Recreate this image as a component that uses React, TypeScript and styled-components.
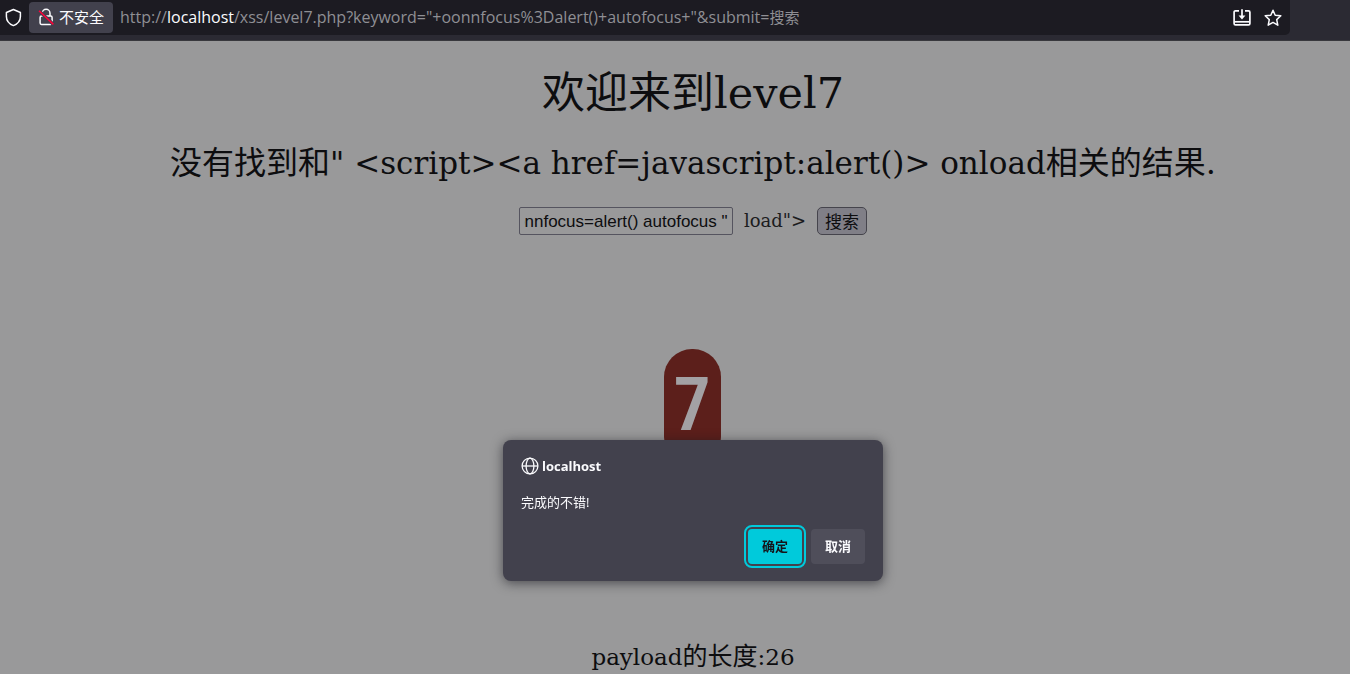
import React, { useLayoutEffect, useRef } from "react";
import styled, { createGlobalStyle } from "styled-components";

const ui = `"Open Sans", "Noto Sans CJK SC", sans-serif`;
const serif = `"DejaVu Serif", "Noto Sans CJK SC", serif`;

const GlobalStyle = createGlobalStyle`
  * { box-sizing: border-box; }
  body { margin: 0; background: #99999a; }
`;

const Window = styled.div`
  min-height: 100vh;
  display: flex;
  flex-direction: column;
  overflow: hidden;
`;

const Toolbar = styled.header`
  height: 41px;
  flex: none;
  padding: 0 60px 6px 0;
  background: #2b2a33;
  border-bottom: 1px solid #38383d;
`;

const AddressBar = styled.div`
  height: 35px;
  display: flex;
  align-items: center;
  padding: 0 8px 0 4px;
  background: #1c1b22;
  border-radius: 0 0 5px 0;
  color: #fbfbfe;
  font: 15px/20px ${ui};
`;

const IconButton = styled.button`
  display: flex;
  padding: 0;
  border: 0;
  background: none;
  color: #fbfbfe;
`;

const SecurityButton = styled.button`
  height: 31px;
  display: flex;
  align-items: center;
  gap: 4px;
  margin: 0 7px 0 6px;
  padding: 0 9px 2px 8px;
  border: 0;
  border-radius: 4px;
  background: #42414d;
  color: #fbfbfe;
  font: 15px/20px ${ui};
`;

const Url = styled.span`
  flex: 1;
  padding-bottom: 2px;
  color: #8f8f94;
  font-size: 16px;
  white-space: nowrap;
`;

const Host = styled.span`
  color: #fbfbfe;
`;

const Query = styled.span`
  font-size: 15px;
`;

const Actions = styled.div`
  display: flex;
  gap: 13px;
`;

const Page = styled.main`
  flex: 1;
  display: flex;
  flex-direction: column;
  align-items: center;
  padding: 20px 0 0 36px;
  color: #0d0d0f;
  font-family: ${serif};
`;

const Title = styled.h1`
  margin: 0;
  font-size: 43px;
  line-height: 64px;
  font-weight: 400;
`;

const Message = styled.h2`
  margin: 14px 0 0;
  font-size: 32px;
  line-height: 48px;
  font-weight: 400;
  white-space: nowrap;
`;

const Latin = styled.span<{ $size: number }>`
  font-size: ${(p) => p.$size}px;
`;

const SearchForm = styled.form`
  display: flex;
  align-items: center;
  margin-top: 20px;
  font-size: 18px;
  line-height: 28px;
`;

const SearchInput = styled.input`
  width: 214px;
  height: 28px;
  padding: 2px 4px 0;
  border: 1px solid #55545f;
  border-radius: 2px;
  outline: 0;
  background: #99999a;
  color: #0d0d0f;
  font: 17px "Liberation Sans", sans-serif;
`;

const Trailing = styled.span`
  margin: 0 11px;
  color: #1c1c1e;
`;

const SubmitButton = styled.button`
  height: 28px;
  padding: 0 7px;
  border: 1px solid #45444c;
  border-radius: 5px;
  background: #807f87;
  color: #0d0d0f;
  font: 17px/24px "Noto Sans CJK SC", sans-serif;
`;

const Badge = styled.svg`
  display: block;
  margin-top: 112px;
`;

const Payload = styled.h3`
  margin: 172px 0 0;
  font-size: 25px;
  line-height: 36px;
  font-weight: 400;
`;

const Dialog = styled.section`
  position: fixed;
  top: 440px;
  left: calc(50% + 18px);
  transform: translateX(-50%);
  width: 380px;
  padding: 16px 18px 17px;
  border-radius: 8px;
  background: #42414d;
  color: #fbfbfe;
  box-shadow: 0 2px 12px rgba(20, 20, 26, 0.6);
  font: 13px/20px ${ui};
`;

const DialogHeader = styled.h4`
  display: flex;
  align-items: center;
  gap: 3px;
  margin: 0;
  font-size: 13px;
  font-weight: 700;
`;

const DialogText = styled.p`
  margin: 16px 0 17px;
`;

const DialogButtons = styled.div`
  display: flex;
  justify-content: flex-end;
  gap: 9px;
`;

const DialogButton = styled.button<{ $primary?: boolean }>`
  width: 54px;
  height: 35px;
  padding: 0 0 2px;
  border: 0;
  border-radius: 4px;
  background: ${(p) => (p.$primary ? "#00cadb" : "#4f4e5a")};
  color: ${(p) => (p.$primary ? "#15141a" : "#fbfbfe")};
  outline: ${(p) => (p.$primary ? "2px solid #00cadb" : "0")};
  outline-offset: 2px;
  font: 700 13px/20px ${ui};
`;

const ShieldIcon = () => (
  <svg width="19" height="19" viewBox="0 0 19 19" fill="none" stroke="currentColor" strokeWidth="1.5" strokeLinejoin="round">
    <path d="M9.4 1.5 16.4 4.5V8.5C16.4 12.5 13.5 16 9.4 17.6 5.3 16 2.4 12.5 2.4 8.5V4.5Z" />
  </svg>
);

const InsecureIcon = () => (
  <svg width="18" height="20" viewBox="0 0 18 20" fill="none" stroke="currentColor" strokeWidth="1.5">
    <path d="M5.2 9V6.2a3.9 3.9 0 0 1 7.8 0V9" />
    <rect x="3.1" y="9" width="12" height="8.4" rx="1.4" />
    <path d="m2 3.8 14.4 13.6" stroke="#42414d" strokeWidth="3.4" />
    <path d="m2 3.8 14.4 13.6" stroke="#ff0039" />
  </svg>
);

const SaveIcon = () => (
  <svg width="18" height="18" viewBox="0 0 18 18" fill="none" stroke="currentColor" strokeWidth="1.7">
    <path d="M6 1.8H2.5a1.4 1.4 0 0 0-1.4 1.4v11.2a1.4 1.4 0 0 0 1.4 1.4h13a1.4 1.4 0 0 0 1.4-1.4V3.2a1.4 1.4 0 0 0-1.4-1.4H12M9 .2v8" />
    <path d="M1.2 12.8h15.6" />
    <path d="M5.6 6.6h6.8L9 10.4Z" fill="currentColor" stroke="none" />
  </svg>
);

const StarIcon = () => (
  <svg width="18" height="18" viewBox="0 0 18 18" fill="none" stroke="currentColor" strokeWidth="1.5" strokeLinejoin="round">
    <path d="m9 1.2 2.2 5 5.6.6-4.1 3.8 1.1 5.6L9 13.4l-4.8 2.8 1.1-5.6-4.1-3.8 5.6-.6Z" />
  </svg>
);

const GlobeIcon = () => (
  <svg width="18" height="18" viewBox="0 0 18 18" fill="none" stroke="currentColor" strokeWidth="1.3">
    <circle cx="9" cy="9" r="7.9" />
    <ellipse cx="9" cy="9" rx="3.9" ry="7.9" />
    <path d="M1.1 9h15.8" />
  </svg>
);

export default function App() {
  const input = useRef<HTMLInputElement>(null);

  useLayoutEffect(() => {
    if (input.current) input.current.scrollLeft = input.current.scrollWidth;
  }, []);

  return (
    <Window>
      <GlobalStyle />
      <Toolbar>
        <AddressBar>
          <IconButton aria-label="Tracking protection"><ShieldIcon /></IconButton>
          <SecurityButton><InsecureIcon />不安全</SecurityButton>
          <Url>
            http://<Host>localhost</Host>/xss/level7.php?keyword="+oonnfocus%3Dalert()+autofocus+"&amp;submit=<Query>搜索</Query>
          </Url>
          <Actions>
            <IconButton aria-label="Save page"><SaveIcon /></IconButton>
            <IconButton aria-label="Bookmark"><StarIcon /></IconButton>
          </Actions>
        </AddressBar>
      </Toolbar>
      <Page>
        <Title>欢迎来到<Latin $size={43}>level7</Latin></Title>
        <Message>
          没有找到和<Latin $size={31}>{'" <script><a href=javascript:alert()> onload'}</Latin>相关的结果.
        </Message>
        <SearchForm onSubmit={(e) => e.preventDefault()}>
          <SearchInput ref={input} aria-label="keyword" defaultValue={' oonnfocus=alert() autofocus "'} />
          <Trailing>{'load">'}</Trailing>
          <SubmitButton type="submit">搜索</SubmitButton>
        </SearchForm>
        <Badge width="60" height="120" viewBox="0 0 60 120" role="img" aria-label="Level 7">
          <rect x="1" y="2" width="57" height="116" rx="28" fill="#5c1f1b" />
          <text x="29" y="83" textAnchor="middle" fontFamily="'Roboto Condensed', 'Liberation Sans', sans-serif" fontWeight="600" fontSize="74" fill="#a3a1a4">7</text>
        </Badge>
        <Payload><Latin $size={23}>payload</Latin>的长度<Latin $size={23}>:26</Latin></Payload>
      </Page>
      <Dialog role="dialog" aria-label="localhost">
        <DialogHeader><GlobeIcon />localhost</DialogHeader>
        <DialogText>完成的不错!</DialogText>
        <DialogButtons>
          <DialogButton $primary>确定</DialogButton>
          <DialogButton>取消</DialogButton>
        </DialogButtons>
      </Dialog>
    </Window>
  );
}
